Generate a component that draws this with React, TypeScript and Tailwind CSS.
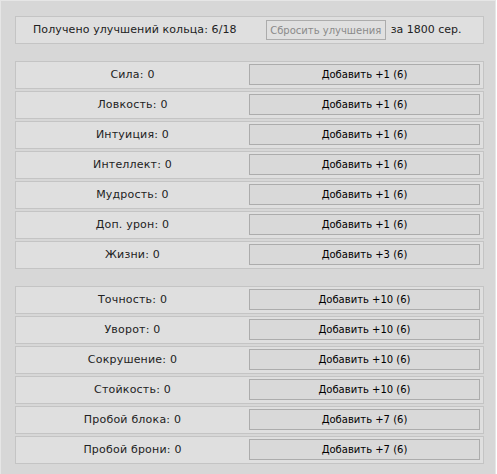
import React from "react";

const group1 = [
  ["Сила", "+1"],
  ["Ловкость", "+1"],
  ["Интуиция", "+1"],
  ["Интеллект", "+1"],
  ["Мудрость", "+1"],
  ["Доп. урон", "+1"],
  ["Жизни", "+3"],
];
const group2 = [
  ["Точность", "+10"],
  ["Уворот", "+10"],
  ["Сокрушение", "+10"],
  ["Стойкость", "+10"],
  ["Пробой блока", "+7"],
  ["Пробой брони", "+7"],
];

function Row({ label, add }: { label: string; add: string }) {
  return (
    <div className="flex h-[28px] items-start border border-[#c4c4c4] bg-[#dfdfdf]">
      <div className="flex h-full flex-1 items-center justify-center text-[11px] tracking-[0.2px] text-[#222]">{label}: 0</div>
      <button className="mr-[3px] mt-[2px] flex h-[21px] w-[231px] items-center justify-center border border-[#acacac] bg-[#d9d9d9] text-[10px] text-black">
        Добавить {add} (6)
      </button>
    </div>
  );
}

export default function App() {
  return (
    <div
      className="h-[474px] w-[496px] border-l border-r border-t border-[#e6e6e6] bg-[#d7d7d7] pl-[14px] pr-[11px] pt-[15px]"
      style={{ fontFamily: '"DejaVu Sans", Verdana, sans-serif' }}
    >
      <div className="flex h-[28px] items-center border border-[#c4c4c4] bg-[#dfdfdf] pl-[17px] text-[11px]">
        <span className="tracking-[0.1px] text-[#222]">Получено улучшений кольца: 6/18</span>
        <button className="ml-[29px] flex h-[20px] w-[120px] items-center justify-center border border-[#acacac] bg-[#e0e0e0] text-[10px] text-[#8a8a8a]">
          Сбросить улучшения
        </button>
        <span className="ml-[5px] text-[#222]">за 1800 сер.</span>
      </div>
      <div className="mt-[17px] flex flex-col gap-[2px]">
        {group1.map(([l, a]) => (
          <Row key={l} label={l} add={a} />
        ))}
      </div>
      <div className="mt-[17px] flex flex-col gap-[2px]">
        {group2.map(([l, a]) => (
          <Row key={l} label={l} add={a} />
        ))}
      </div>
    </div>
  );
}
